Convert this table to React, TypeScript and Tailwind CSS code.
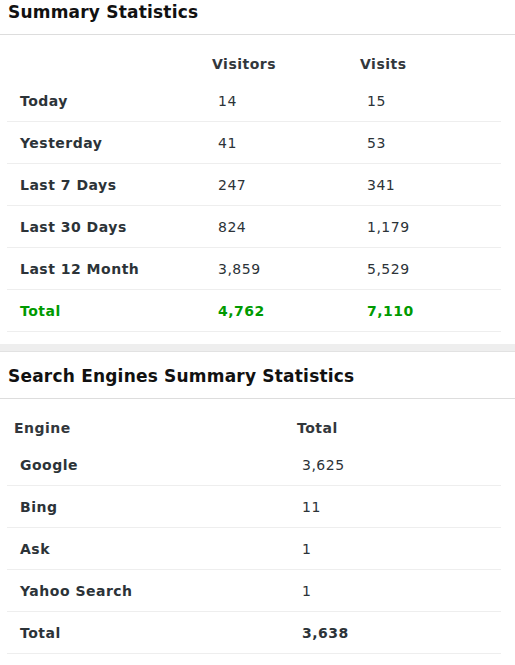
const summary = [
  { label: "Today", visitors: "14", visits: "15" },
  { label: "Yesterday", visitors: "41", visits: "53" },
  { label: "Last 7 Days", visitors: "247", visits: "341" },
  { label: "Last 30 Days", visitors: "824", visits: "1,179" },
  { label: "Last 12 Month", visitors: "3,859", visits: "5,529" },
];

const engines = [
  { name: "Google", total: "3,625" },
  { name: "Bing", total: "11" },
  { name: "Ask", total: "1" },
  { name: "Yahoo Search", total: "1" },
];

function CardTitle({ children }: { children: React.ReactNode }) {
  return (
    <div className="border-b border-[#dddddd] px-2 pt-[2px] h-[35px]">
      <h2 className="text-[17px] leading-[20px] font-bold text-[#111111] tracking-[0.2px]">{children}</h2>
    </div>
  );
}

export default function App() {
  return (
    <div
      className="w-[515px] h-[665px] overflow-hidden bg-[#eeeeee] text-[14px] tracking-[0.5px] text-[#2c3338]"
      style={{ fontFamily: '"DejaVu Sans", Verdana, sans-serif' }}
    >
      <section className="bg-white pb-[12px]">
        <CardTitle>Summary Statistics</CardTitle>
        <div className="ml-[7px] w-[494px]">
          <div className="grid grid-cols-[198px_149px_1fr] h-[45px] pt-[19px] font-bold text-[#32373c]">
            <div />
            <div className="pl-[7px]">Visitors</div>
            <div className="pl-[6px]">Visits</div>
          </div>
          {summary.map((r) => (
            <div key={r.label} className="grid grid-cols-[198px_149px_1fr] h-[42px] pt-[2px] items-center border-b border-[#eeeeee]">
              <div className="pl-[13px] font-bold">{r.label}</div>
              <div className="pl-[13px]">{r.visitors}</div>
              <div className="pl-[13px]">{r.visits}</div>
            </div>
          ))}
          <div className="grid grid-cols-[198px_149px_1fr] h-[42px] pt-[2px] items-center border-b border-[#eeeeee] font-bold text-[#009a00]">
            <div className="pl-[13px]">Total</div>
            <div className="pl-[13px]">4,762</div>
            <div className="pl-[13px]">7,110</div>
          </div>
        </div>
      </section>

      <div className="h-[8px] border-b border-[#e2e2e2]" />

      <section className="bg-white pt-[12px] pb-[13px]">
        <CardTitle>Search Engines Summary Statistics</CardTitle>
        <div className="ml-[7px] w-[494px]">
          <div className="grid grid-cols-[283px_1fr] h-[45px] pt-[19px] font-bold text-[#32373c]">
            <div className="pl-[7px]">Engine</div>
            <div className="pl-[7px]">Total</div>
          </div>
          {engines.map((e) => (
            <div key={e.name} className="grid grid-cols-[283px_1fr] h-[42px] pt-[2px] items-center border-b border-[#eeeeee]">
              <div className="pl-[13px] font-bold">{e.name}</div>
              <div className="pl-[12px]">{e.total}</div>
            </div>
          ))}
          <div className="grid grid-cols-[283px_1fr] h-[42px] pt-[2px] items-center border-b border-[#eeeeee] font-bold">
            <div className="pl-[13px]">Total</div>
            <div className="pl-[12px]">3,638</div>
          </div>
        </div>
      </section>
    </div>
  );
}
